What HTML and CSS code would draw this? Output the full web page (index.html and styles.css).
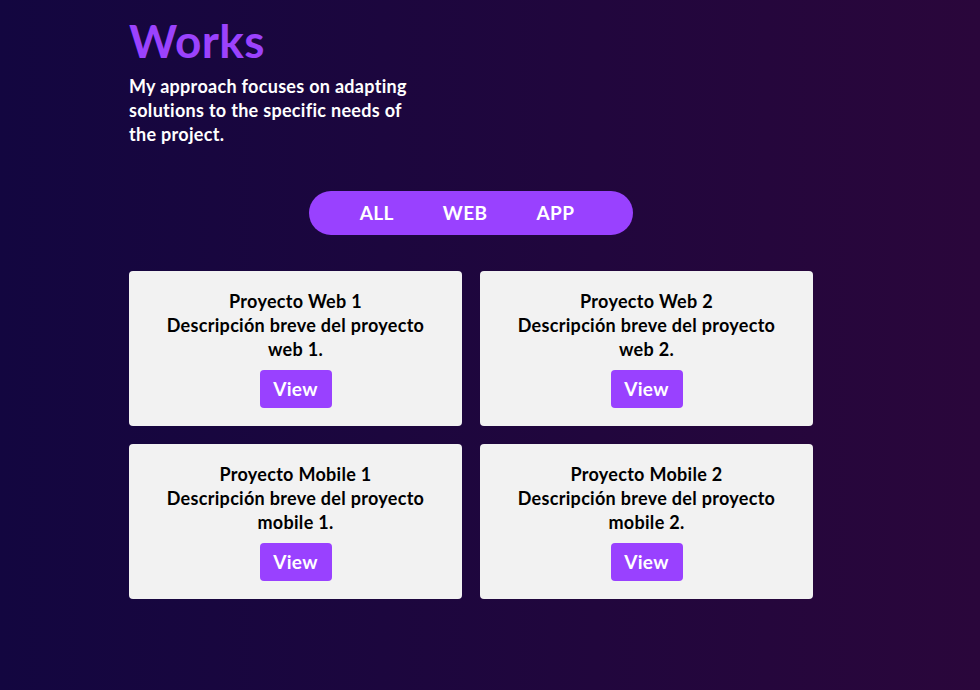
FILE: index.html
```html
<!DOCTYPE html>
<html lang="en">
<head>
<meta charset="utf-8">
<title>Works</title>
<link rel="stylesheet" href="styles.css">
</head>
<body>
<section class="works">
  <h1 class="works-title">Works</h1>
  <p class="works-intro">My approach focuses on adapting solutions to the specific needs of the project.</p>
  <nav class="filter">
    <button class="filter-btn">ALL</button>
    <button class="filter-btn">WEB</button>
    <button class="filter-btn">APP</button>
  </nav>
  <div class="grid">
    <div class="card">
      <h3 class="card-title">Proyecto Web 1</h3>
      <p class="card-desc">Descripción breve del proyecto web 1.</p>
      <button class="view-btn">View</button>
    </div>
    <div class="card">
      <h3 class="card-title">Proyecto Web 2</h3>
      <p class="card-desc">Descripción breve del proyecto web 2.</p>
      <button class="view-btn">View</button>
    </div>
    <div class="card">
      <h3 class="card-title">Proyecto Mobile 1</h3>
      <p class="card-desc">Descripción breve del proyecto mobile 1.</p>
      <button class="view-btn">View</button>
    </div>
    <div class="card">
      <h3 class="card-title">Proyecto Mobile 2</h3>
      <p class="card-desc">Descripción breve del proyecto mobile 2.</p>
      <button class="view-btn">View</button>
    </div>
  </div>
</section>
</body>
</html>
```
FILE: styles.css
```css
html, body {
  margin: 0;
  padding: 0;
  height: 100%;
}
body {
  background: linear-gradient(to right, #130640, #2a063b);
  font-family: Lato, "Open Sans", sans-serif;
  color: #ffffff;
}
.works {
  width: 684px;
  margin-left: 129px;
  padding-top: 18px;
}
.works-title {
  margin: 0;
  font-size: 46px;
  line-height: 46px;
  font-weight: 700;
  letter-spacing: 0.4px;
  color: #9b42fd;
}
.works-intro {
  margin: 10px 0 0 0;
  width: 285px;
  font-size: 18px;
  line-height: 24px;
  font-weight: 700;
  letter-spacing: 0.3px;
}
.filter {
  margin: 45px auto 0;
  width: 324px;
  height: 44px;
  box-sizing: border-box;
  padding: 0 8px 2px 0;
  border-radius: 22px;
  background: #9941ff;
  display: flex;
  justify-content: center;
  align-items: center;
  gap: 49px;
}
.filter-btn {
  background: none;
  border: none;
  padding: 0;
  color: #ffffff;
  font-family: inherit;
  font-size: 19px;
  font-weight: 700;
  letter-spacing: 0.4px;
  cursor: pointer;
}
.grid {
  margin-top: 36px;
  display: grid;
  grid-template-columns: 333px 333px;
  gap: 18px;
}
.card {
  background: #f2f2f2;
  border-radius: 4px;
  height: 155px;
  box-sizing: border-box;
  padding: 18px 24px;
  text-align: center;
  color: #000000;
}
.card-title, .card-desc {
  margin: 0;
  font-size: 18px;
  line-height: 24px;
  font-weight: 700;
  letter-spacing: 0.3px;
}
.view-btn {
  margin-top: 9px;
  width: 72px;
  height: 38px;
  padding: 0 0 2px 0;
  border: none;
  border-radius: 4px;
  background: #9941ff;
  color: #ffffff;
  font-family: inherit;
  font-size: 19px;
  font-weight: 700;
  letter-spacing: 0.3px;
  cursor: pointer;
}
```
